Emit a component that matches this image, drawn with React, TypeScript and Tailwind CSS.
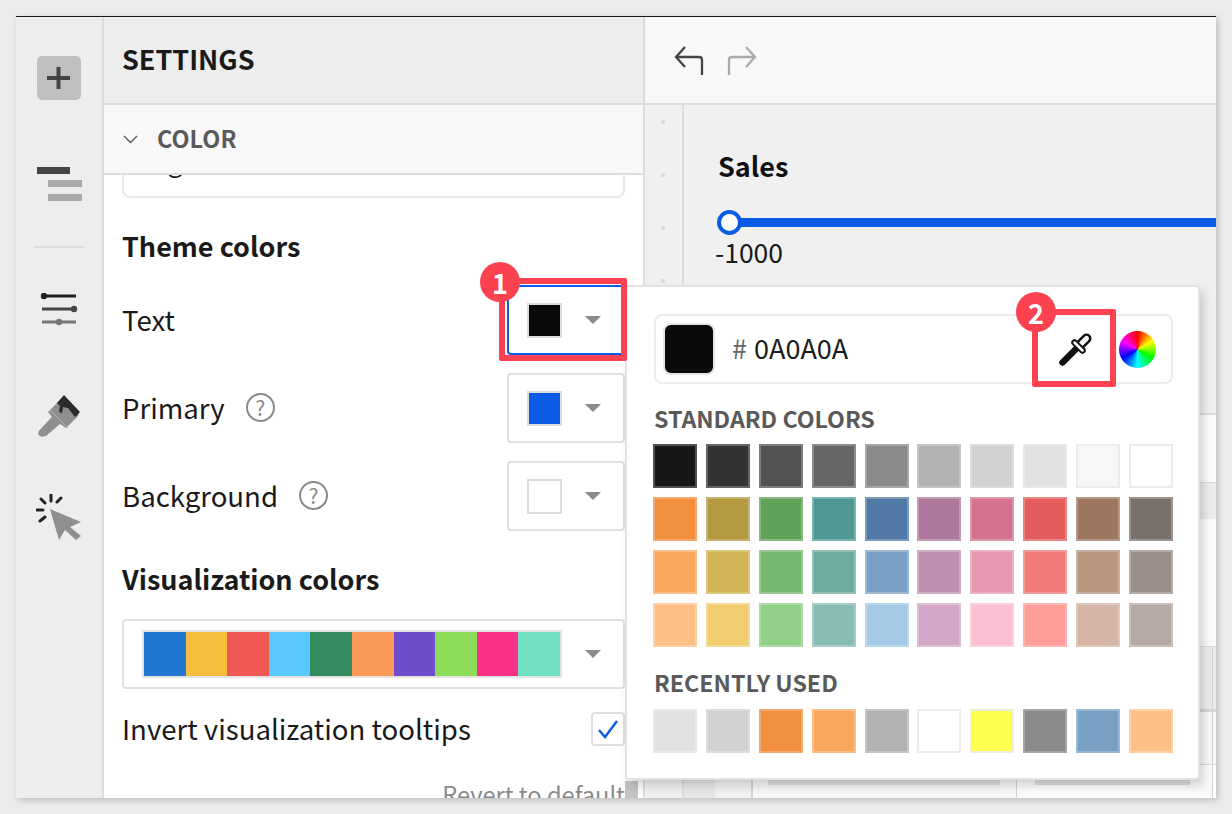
import React from "react";

const FONT = "font-['Noto_Sans_CJK_JP','Noto_Sans',sans-serif]";

const standard = [
  ["#171717", "#333333", "#525252", "#666666", "#8a8a8a", "#b2b2b2", "#d2d2d2", "#e2e2e2", "#f7f7f7", "#ffffff"],
  ["#f28f3f", "#b39a40", "#5fa258", "#4f9794", "#5079a5", "#ae789d", "#d4738f", "#e25c5c", "#9d7660", "#7a706b"],
  ["#f8a85f", "#d2b355", "#76b86e", "#6dab9f", "#78a0c5", "#bf8fb0", "#e798b0", "#f07b78", "#b99680", "#9b8e88"],
  ["#ffc085", "#f0cd6e", "#91d086", "#8abcb6", "#a4cae6", "#d3a7c8", "#fabfd1", "#ff9d98", "#d5b5a6", "#b7aaa5"],
];
const recent = ["#e2e2e2", "#d2d2d2", "#f28f3f", "#f8a85f", "#b2b2b2", "#ffffff", "#ffff4d", "#8a8a8a", "#78a0c5", "#ffc085"];
const palette = ["#2176d2", "#f6bd3d", "#ef5854", "#59c9fb", "#338c60", "#fb9a58", "#6f4cca", "#8cdc58", "#f83185", "#70e0c5"];

function Caret() {
  return (
    <svg width="16" height="8" viewBox="0 0 16 8" className="block">
      <path d="M0 0h16L8 8z" fill="#8a8a8a" />
    </svg>
  );
}

function Question() {
  return (
    <span className="flex h-[29px] w-[29px] items-center justify-center rounded-full border-2 border-[#8a8a8a] text-[21px] leading-none text-[#8a8a8a]">
      ?
    </span>
  );
}

function ColorRow({ label, color, help, active }: { label: string; color: string; help?: boolean; active?: boolean }) {
  return (
    <div className="flex h-[70px] items-center justify-between">
      <div className="flex items-center gap-[21px] pb-[2px]">
        <span className="text-[27.6px] leading-[36px] text-[#1a1a1a]">{label}</span>
        {help && <Question />}
      </div>
      <div
        className={`flex h-[70px] w-[118px] items-center rounded-[4px] border-2 pl-[18px] ${active ? "border-[#0a5be5]" : "border-[#e0e0e0]"}`}
      >
        <span className="block h-[35px] w-[35px] border-2 border-[#dcdcdc]" style={{ backgroundColor: color }} />
        <span className="ml-[23px]">
          <Caret />
        </span>
      </div>
    </div>
  );
}

function Swatch({ c }: { c: string }) {
  const light = c === "#ffffff" || c === "#f7f7f7";
  const yellow = c === "#ffff4d";
  return (
    <span
      className={`block h-[44px] w-[44px] border-2 ${light ? "border-[#ececec]" : yellow ? "border-[#ecedde]" : "border-white/25"}`}
      style={{ backgroundColor: c }}
    />
  );
}

function Rail() {
  return (
    <div className="flex w-[88px] shrink-0 flex-col items-center border-r-2 border-[#dcdcdc] bg-[#ededed]">
      <div className="mt-[39px] flex h-[44px] w-[44px] items-center justify-center rounded-[5px] bg-[#bfbfbf]">
        <svg width="24" height="24" viewBox="0 0 24 24">
          <path d="M0 12h23M11.500 1v22" stroke="#444" strokeWidth="4" fill="none" />
        </svg>
      </div>
      <svg width="46" height="34" viewBox="0 0 46 34" className="ml-[2px] mt-[67px]">
        <rect x="0" y="0" width="33" height="7" fill="#444" />
        <rect x="11" y="13" width="34" height="7" fill="#aaa" />
        <rect x="11" y="27" width="34" height="7" fill="#aaa" />
      </svg>
      <div className="mt-[45px] h-[2px] w-[50px] bg-[#dcdcdc]" />
      <svg width="38" height="34" viewBox="0 0 38 34" className="mt-[45px]">
        <path d="M2 3h34" stroke="#1f1f1f" strokeWidth="3" />
        <circle cx="4" cy="3" r="3.200" fill="#1f1f1f" />
        <path d="M2 16h33" stroke="#444" strokeWidth="3" />
        <circle cx="34" cy="16" r="3.200" fill="#444" />
        <path d="M2 29h34" stroke="#777" strokeWidth="3" />
        <circle cx="19" cy="29" r="3.200" fill="#777" />
      </svg>
      <svg width="44" height="42" viewBox="0 0 44 42" className="mt-[68px]">
        <path d="M2 36 L15 22 L11 17 L25 3 L42 20 L29 33 L23 29 L9 41 Q2 42 2 36z" fill="#8f8f8f" />
        <path d="M2 36a3.500 3.500 0 0 0 6 4L19 28l-5-5z" fill="#8f8f8f" />
        <path d="M20 8 L27 0 L43 17 L38 22 L31 13 L26 12 L25 18 L22 17 L23 11z" fill="#2b2b2b" />
        <path d="M13 15 L31 33" stroke="#bdbdbd" strokeWidth="0.800" />
      </svg>
      <svg width="46" height="46" viewBox="0 0 46 46" className="mt-[57px]">
        <path d="M14 15 L45 28 L34 33 L45 42 L40 46 L29 36 L23 46z" fill="#8f8f8f" />
        <path d="M15 1v6M5 5l4 4M25 4l-4 4M1 16h6M4 27l5-4" stroke="#222" strokeWidth="3" strokeLinecap="round" fill="none" />
      </svg>
    </div>
  );
}

function Settings() {
  return (
    <div className="flex w-[541px] shrink-0 flex-col overflow-hidden border-r-2 border-[#dcdcdc] bg-white">
      <div className="flex h-[88px] shrink-0 items-center border-b-2 border-[#dcdcdc] bg-[#ededed] pb-[2px] pl-[18px]">
        <span className="text-[27px] font-semibold leading-[36px] text-[#1a1a1a]">SETTINGS</span>
      </div>
      <div className="flex h-[70px] shrink-0 items-center border-b-2 border-[#dcdcdc] bg-[#f8f8f8] pl-[19px]">
        <svg width="15" height="9" viewBox="0 0 15 9">
          <path d="M1 1l6.500 6.500L14 1" stroke="#555" strokeWidth="1.300" fill="none" />
        </svg>
        <span className="ml-[19px] pb-[2px] text-[23.5px] font-semibold leading-[34px] text-[#5a5a5a]">COLOR</span>
      </div>
      <div className="flex-1 overflow-hidden pl-[18px] pr-[18px]">
        <div className="-mt-[37px] flex h-[60px] items-center rounded-[8px] border-2 border-[#e8e8e8] pb-[15px] pl-[20px] text-[27px] leading-[36px] text-[#1a1a1a]">
          Sigma
        </div>
        <div className="mt-[30px] text-[27px] font-semibold leading-[36px] text-[#1a1a1a]">Theme colors</div>
        <div className="mt-[21px] flex flex-col gap-[18px]">
          <ColorRow label="Text" color="#0a0a0a" active />
          <ColorRow label="Primary" color="#0a5be5" help />
          <ColorRow label="Background" color="#ffffff" help />
        </div>
        <div className="mt-[30px] text-[27px] font-semibold leading-[36px] text-[#1a1a1a]">Visualization colors</div>
        <div className="mt-[22px] flex h-[70px] items-center rounded-[4px] border-2 border-[#e0e0e0] pl-[18px]">
          <div className="flex h-[48px] w-[420px] border-2 border-[#e3e3e3]">
            {palette.map((c) => (
              <span key={c} className="block flex-1" style={{ backgroundColor: c }} />
            ))}
          </div>
          <span className="ml-[23px]">
            <Caret />
          </span>
        </div>
        <div className="mt-[23px] flex h-[34px] items-center justify-between">
          <span className="pb-[2px] text-[27.6px] leading-[36px] text-[#1a1a1a]">Invert visualization tooltips</span>
          <span className="flex h-[34px] w-[34px] items-center justify-center rounded-[4px] border-2 border-[#dedede]">
            <svg width="22" height="20" viewBox="0 0 22 20">
              <path d="M2 11l6 7L20 2" stroke="#0a5be5" strokeWidth="2.400" fill="none" />
            </svg>
          </span>
        </div>
        <div className="mt-[30px] text-right text-[23.6px] leading-[36px] text-[#8a8a8a]">Revert to default</div>
      </div>
    </div>
  );
}

function Canvas() {
  return (
    <div className="flex min-w-0 flex-1 flex-col">
      <div className="flex h-[88px] shrink-0 items-center gap-[23px] border-b-2 border-[#dcdcdc] bg-[#f8f8f8] pl-[29px]">
        <svg width="30" height="30" viewBox="0 0 30 30">
          <path d="M28 30V15Q28 12 25 12H3M11 2L2 12l9 10" stroke="#444" strokeWidth="2.300" fill="none" />
        </svg>
        <svg width="30" height="30" viewBox="0 0 30 30">
          <path d="M2 30V15Q2 12 5 12H27M19 2L28 12l-9 10" stroke="#ababab" strokeWidth="2.300" fill="none" />
        </svg>
      </div>
      <div className="flex min-h-0 flex-1">
        <div className="flex w-[39px] shrink-0 flex-col items-center gap-[49px] border-r-2 border-[#dcdcdc] bg-[#f0f0f0] pr-[1px] pt-[15px]">
          {[0, 1, 2, 3, 4, 5, 6, 7, 8, 9, 10, 11].map((i) => (
            <span key={i} className="block h-[4px] w-[4px] shrink-0 rounded-full bg-[#d8d8d8]" />
          ))}
        </div>
        <div className="flex min-w-0 flex-1 flex-col overflow-hidden bg-white">
          <div className="relative h-[308px] shrink-0 bg-[#f0f0f0] pl-[34px] pt-[43px]">
            <div className="text-[27px] font-semibold leading-[36px] text-[#111]">Sales</div>
            <div className="relative ml-[11px] mt-[34px] h-[9px] bg-[#0a5be5]">
              <span className="absolute -left-[12px] -top-[8px] block h-[25px] w-[25px] rounded-full border-[4px] border-[#0a5be5] bg-white" />
            </div>
            <div className="-ml-[3px] mt-[7px] text-[26.5px] leading-[36px] text-[#1a1a1a]">-1000</div>
          </div>
          <div className="h-[2px] shrink-0 bg-[#dcdcdc]" />
          <div className="h-[67px] shrink-0 bg-[#fbfbfb]" />
          <div className="h-[1px] shrink-0 bg-[#dcdcdc]" />
          <div className="h-[36px] shrink-0 bg-[#ececec]" />
          <div className="h-[127px] shrink-0 bg-[#fbfbfb]" />
          <div className="h-[1px] shrink-0 bg-[#dcdcdc]" />
          <div className="flex h-[62px] shrink-0 justify-end bg-[#ececec]">
            <span className="mr-[3px] w-[1px] bg-[#d2d2d2]" />
          </div>
          <div className="h-[3px] shrink-0 bg-[#d6d6d6]" />
          <div className="flex h-[52px] shrink-0 justify-end bg-[#f8f8f8]">
            <span className="mr-[3px] w-[1px] bg-[#d2d2d2]" />
          </div>
          <div className="h-[1px] shrink-0 bg-[#dcdcdc]" />
          <div className="flex min-h-0 flex-1 bg-white">
            <span className="w-[31px] bg-[#e6e6e6]" />
            <span className="w-[38px] border-r-2 border-[#d2d2d2] bg-[#f2f2f2]" />
            <span className="w-[264px] border-r border-[#d2d2d2] bg-[#f7f7f7] pl-[15px] pr-[16px] pt-[15px]">
              <span className="block h-[5px] bg-[#dedede]" />
            </span>
            <span className="flex-1 border-r border-[#d2d2d2] bg-[#fbfbfb] pl-[18px] pr-[22px] pt-[15px]">
              <span className="block h-[5px] bg-[#dedede]" />
            </span>
            <span className="w-[3px]" />
          </div>
        </div>
      </div>
    </div>
  );
}

function Popover() {
  return (
    <div className="absolute left-[625px] top-[285px] flex h-[495px] w-[575px] flex-col rounded-[4px] border-2 border-[#e2e2e2] bg-white pl-[27px] pr-[25px] pt-[27px] shadow-[4px_6px_10px_rgba(0,0,0,0.16)]">
      <div className="flex h-[70px] items-center rounded-[8px] border-2 border-[#ececec] pl-[7px]">
        <span className="block h-[52px] w-[52px] rounded-[8px] border-2 border-[#e4e4e4] bg-[#0a0a0a]" />
        <span className="ml-[17px] pb-[2px] text-[27px] leading-[36px] text-[#666]">#</span>
        <span className="ml-[7px] pb-[2px] text-[27px] leading-[36px] text-[#1a1a1a]">0A0A0A</span>
        <span className="ml-auto mr-[15px] block h-[37px] w-[37px] rounded-full bg-[conic-gradient(#ff0000,#ffff00_60deg,#00ff00_120deg,#00ffff_180deg,#0000ff_240deg,#ff00ff_300deg,#ff0000)]" />
      </div>
      <div className="mt-[18px] text-[23.2px] font-semibold leading-[32px] text-[#5a5a5a]">STANDARD COLORS</div>
      <div className="-ml-[1px] mt-[10px] flex flex-col gap-[9px]">
        {standard.map((row, i) => (
          <div key={i} className="flex justify-between">
            {row.map((c) => (
              <Swatch key={c} c={c} />
            ))}
          </div>
        ))}
      </div>
      <div className="mt-[19px] text-[23.2px] font-semibold leading-[32px] text-[#5a5a5a]">RECENTLY USED</div>
      <div className="-ml-[1px] mt-[11px] flex justify-between">
        {recent.map((c) => (
          <Swatch key={c} c={c} />
        ))}
      </div>
    </div>
  );
}

function Badge({ n, cls }: { n: string; cls: string }) {
  return (
    <span className={`absolute flex h-[40px] w-[40px] items-center justify-center rounded-full bg-[#fc4150] text-[27px] font-bold leading-none text-white ${cls}`}>
      {n}
    </span>
  );
}

export default function App() {
  return (
    <div className={`relative h-[814px] w-[1232px] overflow-hidden bg-[#ebebeb] px-4 pb-4 pt-4 ${FONT}`}>
      <div className="flex h-[782px] border-t border-[#1a1a1a] shadow-[2px_2px_6px_rgba(0,0,0,0.2)]">
        <Rail />
        <Settings />
        <Canvas />
      </div>
      <div className="absolute left-[625px] top-[781px] h-[17px] w-[13px] bg-[#c4c4c4]" />
      <Popover />
      <svg viewBox="0 0 34 34" className="absolute left-[1059px] top-[332px] h-[34px] w-[34px]">
        <path d="M3.500 30.500L17 17" stroke="#111" strokeWidth="6.500" strokeLinecap="round" fill="none" />
        <path d="M22 12L27.500 6.500" stroke="#111" strokeWidth="10" strokeLinecap="round" fill="none" />
        <path d="M22 12L27.500 6.500" stroke="#fff" strokeWidth="5" strokeLinecap="round" fill="none" />
        <path d="M15.500 10.500L23.500 18.500" stroke="#111" strokeWidth="6.500" strokeLinecap="round" fill="none" />
        <path d="M15.500 10.500L23.500 18.500" stroke="#fff" strokeWidth="2.500" strokeLinecap="round" fill="none" />
      </svg>
      <div className="absolute left-[499px] top-[278px] h-[83px] w-[128px] rounded-[2px] border-[6px] border-[#fc4150]" />
      <div className="absolute left-[1032px] top-[309px] h-[78px] w-[84px] rounded-[2px] border-[6px] border-[#fc4150]" />
      <Badge n="1" cls="left-[480px] top-[262px]" />
      <Badge n="2" cls="left-[1016px] top-[292px]" />
    </div>
  );
}
